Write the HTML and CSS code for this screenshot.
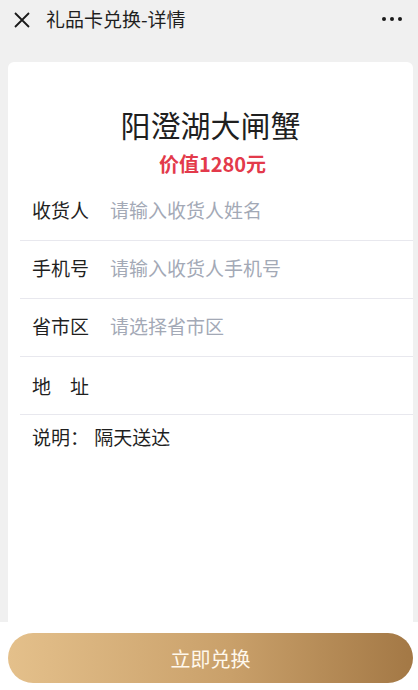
FILE: index.html
```html
<!DOCTYPE html>
<html lang="zh-CN">
<head>
    <meta charset="UTF-8">
    <meta name="viewport" content="width=device-width, initial-scale=1.0">
    <title>礼品卡兑换-详情</title>
    <link rel="stylesheet" href="styles.css">
</head>
<body>
    <header class="nav-bar">
        <svg class="nav-close" width="16" height="16" viewBox="0 0 16 16">
            <path d="M1 1 L15 15 M15 1 L1 15" stroke="#1a1a1a" stroke-width="1.8" fill="none"/>
        </svg>
        <h1 class="nav-title">礼品卡兑换-详情</h1>
        <div class="nav-more">
            <span></span><span></span><span></span>
        </div>
    </header>

    <main class="page">
        <section class="card">
            <h2 class="goods-name">阳澄湖大闸蟹</h2>
            <p class="goods-price">价值1280元</p>

            <div class="form-row">
                <label class="form-label">收货人</label>
                <span class="form-input placeholder">请输入收货人姓名</span>
            </div>
            <div class="form-row">
                <label class="form-label">手机号</label>
                <span class="form-input placeholder">请输入收货人手机号</span>
            </div>
            <div class="form-row">
                <label class="form-label">省市区</label>
                <span class="form-input placeholder">请选择省市区</span>
            </div>
            <div class="form-row address-row">
                <label class="form-label">地　址</label>
                <span class="form-input"></span>
            </div>
            <div class="note">
                <span class="note-label">说明：</span>
                <span>隔天送达</span>
            </div>
        </section>
    </main>

    <footer class="bottom-bar">
        <button class="submit-btn">立即兑换</button>
    </footer>
</body>
</html>
```

FILE: styles.css
```css
/* General */
* {
    box-sizing: border-box;
}

html, body {
    height: 100%;
}

body {
    margin: 0;
    font-family: "Noto Sans CJK SC", "Noto Sans", sans-serif;
    background-color: #f0f0f0;
    color: #1f1f1f;
    display: flex;
    flex-direction: column;
    overflow: hidden;
}

/* Nav bar */
.nav-bar {
    height: 38px;
    display: flex;
    align-items: center;
    padding: 0 16px 0 14px;
}

.nav-close {
    flex-shrink: 0;
    margin-top: 1px;
}

.nav-title {
    margin: 0 0 0 16px;
    font-size: 19px;
    font-weight: normal;
    line-height: 24px;
    flex: 1;
}

.nav-more {
    display: flex;
    gap: 4px;
}

.nav-more span {
    width: 4px;
    height: 4px;
    border-radius: 50%;
    background-color: #1a1a1a;
}

/* Card */
.page {
    flex: 1;
    padding: 24px 5px 0 8px;
    display: flex;
}

.card {
    flex: 1;
    background-color: #ffffff;
    border-radius: 6px 6px 0 0;
    padding: 42px 0 0 12px;
}

.goods-name {
    margin: 0;
    text-align: center;
    font-size: 30px;
    font-weight: normal;
    line-height: 40px;
    padding-right: 12px;
}

.goods-price {
    margin: 7px 0 6px;
    text-align: center;
    font-size: 20px;
    font-weight: bold;
    line-height: 26px;
    color: #e33a4b;
    padding-right: 8px;
}

.form-row {
    display: flex;
    align-items: center;
    padding: 15px 0 18px 12px;
    border-bottom: 1px solid #e8e8ee;
    font-size: 19px;
    line-height: 24px;
}

.address-row {
    padding-top: 17px;
    padding-bottom: 16px;
}

.form-label {
    width: 78px;
    flex-shrink: 0;
}

.form-input {
    flex: 1;
    min-height: 24px;
}

.placeholder {
    color: #a3a9b6;
}

.note {
    padding: 10px 0 0 12px;
    font-size: 19px;
    line-height: 24px;
}

.note-label {
    margin-right: 1px;
}

/* Bottom bar */
.bottom-bar {
    height: 68px;
    background-color: #ffffff;
    padding: 11px 5px 7px 8px;
}

.submit-btn {
    width: 100%;
    height: 50px;
    border: none;
    border-radius: 25px;
    background: linear-gradient(90deg, #e4c08b 0%, #c9a06a 55%, #a37845 100%);
    color: #fff8ec;
    font-family: "Noto Sans CJK SC", sans-serif;
    font-size: 20px;
    letter-spacing: 0;
}
```
